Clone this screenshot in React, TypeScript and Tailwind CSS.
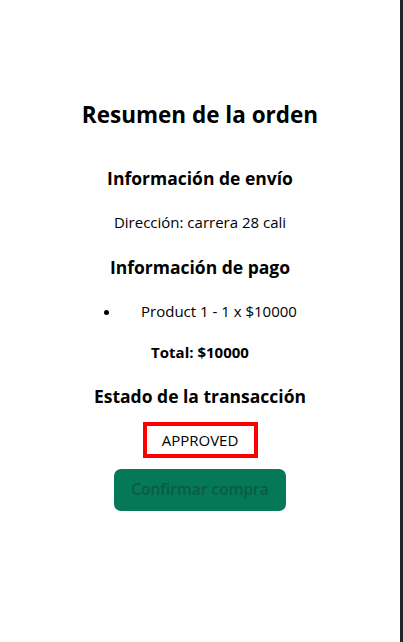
import * as React from "react";

export default function App() {
  return (
    <div className="flex h-[642px] w-full bg-white font-['Open_Sans',sans-serif] text-black">
      <main className="flex flex-1 flex-col items-center pt-[100px]">
        <h1 className="text-[22.5px] font-bold leading-[30px]">Resumen de la orden</h1>
        <h2 className="mt-[36px] text-[17.5px] font-bold leading-[24px]">Información de envío</h2>
        <p className="mt-[22px] text-[15px] leading-[20px]">Dirección: carrera 28 cali</p>
        <h2 className="mt-[23px] text-[17.5px] font-bold leading-[24px]">Información de pago</h2>
        <ul className="mt-[22px] list-disc pl-[18px] text-[15px] leading-[20px]">
          <li className="pl-[20px]">Product 1 - 1 x $10000</li>
        </ul>
        <p className="mt-[21px] text-[15px] font-bold leading-[20px]">Total: $10000</p>
        <h2 className="mt-[22px] text-[17.5px] font-bold leading-[24px]">Estado de la transacción</h2>
        <div className="mt-[14px] flex h-[36px] w-[115px] items-center justify-center border-4 border-[#ff0000] text-[15px]">
          APPROVED
        </div>
        <button
          disabled
          className="mt-[11px] h-[42px] w-[172px] rounded-[7px] bg-[#047857] text-[15.5px] font-semibold text-[#0a5c43]"
        >
          Confirmar compra
        </button>
      </main>
      <div className="w-[3px] bg-[#262626]" />
    </div>
  );
}
